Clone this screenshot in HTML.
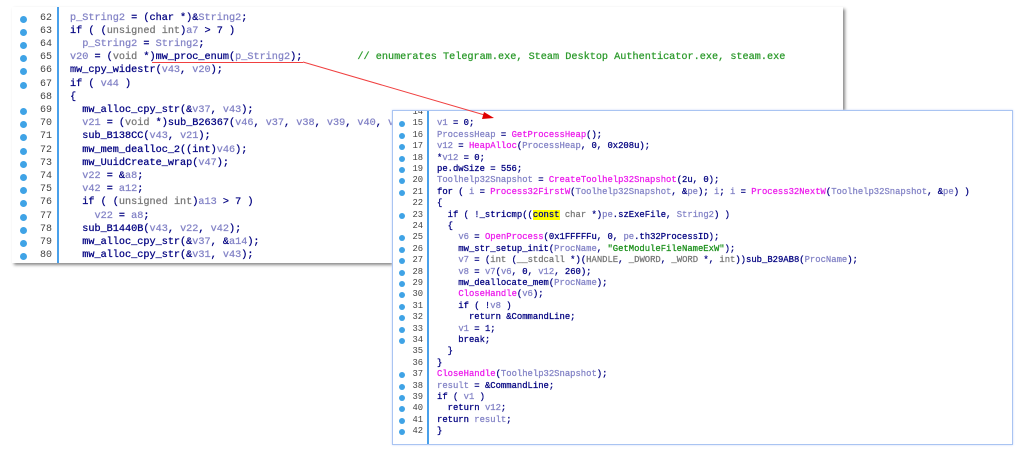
<!DOCTYPE html>
<html><head><meta charset="utf-8"><style>
body{margin:0;width:1024px;height:455px;background:#fff;position:relative;overflow:hidden;font-family:"Liberation Mono","DejaVu Sans Mono",monospace}
.box{position:absolute;background:#fff}
#b1{left:12px;top:7px;width:831px;height:256px;box-shadow:2px 2px 3px #888;overflow:hidden}
#b2{left:392px;top:110px;width:619px;height:333px;border:1.5px solid #a9c4f2;box-shadow:0 0 2px #c8d8f8;overflow:hidden}
.l{position:absolute;white-space:pre;color:#000080;-webkit-text-stroke:0.25px currentColor}
#b1 .l{font-size:10.2px;left:58px}
#b2 .l{font-size:8.9px;left:44px}
.n{position:absolute;color:#444;text-align:right}
#b1 .n{font-size:10px;left:18px;width:22px}
#b2 .n{font-size:8.8px;left:10px;width:20px}
.d{position:absolute;border-radius:50%;background:#3fa3e6}
#b1 .d{width:7px;height:7px;left:8px}
#b2 .d{width:6px;height:6px;left:6px}
.vl{position:absolute;top:0;bottom:0;width:1.5px;background:#49a0ea}
.v{color:#8383c6}.a{color:#ec1aec}.c{color:#2c9a2c}.s{color:#1a8f1a}.g{color:#777}
.hl{background:#ffff00}
</style></head><body>
<div class="box" id="b1">
<div class="vl" style="left:45px"></div>
<div id="c1"></div>
</div>
<div class="box" id="b2">
<div class="vl" style="left:34px"></div>
<div id="c2"></div>
</div>
<svg style="position:absolute;left:0;top:0" width="1024" height="455">
<line x1="152" y1="62.5" x2="303" y2="62.5" stroke="#f04040" stroke-width="1"/>
<line x1="303" y1="62" x2="488" y2="116" stroke="#f04040" stroke-width="1"/>
<polygon points="494,118 484,112 482,119" fill="#e00000"/>
</svg>
<script>
function build(id,start,top,step,lines,nodot){
 var h='';
 lines.forEach(function(t,i){
  var y=top+i*step, n=start+i;
  if(nodot.indexOf(n)<0) h+='<div class="d" style="top:'+(y+3)+'px"></div>';
  h+='<div class="n" style="top:'+y+'px">'+n+'</div><div class="l" style="top:'+y+'px">'+t+'</div>';
 });
 document.getElementById(id).innerHTML=h;
}
build('c1',62,5.5,13.2,[
'<span class="v">p_String2</span> = (char *)&amp;<span class="v">String2</span>;',
'if ( (<span class="g">unsigned int</span>)<span class="v">a7</span> &gt; 7 )',
'  <span class="v">p_String2</span> = <span class="v">String2</span>;',
'<span class="v">v20</span> = (<span class="g">void</span> *)mw_proc_enum(<span class="v">p_String2</span>);         <span class="c">// enumerates Telegram.exe, Steam Desktop Authenticator.exe, steam.exe</span>',
'mw_cpy_widestr(<span class="v">v43</span>, <span class="v">v20</span>);',
'if ( <span class="v">v44</span> )',
'{',
'  mw_alloc_cpy_str(&amp;<span class="v">v37</span>, <span class="v">v43</span>);',
'  <span class="v">v21</span> = (<span class="g">void</span> *)sub_B26367(<span class="v">v46</span>, <span class="v">v37</span>, <span class="v">v38</span>, <span class="v">v39</span>, <span class="v">v40</span>, <span class="v">v41</span>);',
'  sub_B138CC(<span class="v">v43</span>, <span class="v">v21</span>);',
'  mw_mem_dealloc_2((int)<span class="v">v46</span>);',
'  mw_UuidCreate_wrap(<span class="v">v47</span>);',
'  <span class="v">v22</span> = &amp;<span class="v">a8</span>;',
'  <span class="v">v42</span> = <span class="v">a12</span>;',
'  if ( (<span class="g">unsigned int</span>)<span class="v">a13</span> &gt; 7 )',
'    <span class="v">v22</span> = <span class="v">a8</span>;',
'  sub_B1440B(<span class="v">v43</span>, <span class="v">v22</span>, <span class="v">v42</span>);',
'  mw_alloc_cpy_str(&amp;<span class="v">v37</span>, &amp;<span class="v">a14</span>);',
'  mw_alloc_cpy_str(&amp;<span class="v">v31</span>, <span class="v">v43</span>);'
],[68]);
build('c2',14,-4,11.4,[
'',
'<span class="v">v1</span> = 0;',
'<span class="v">ProcessHeap</span> = <span class="a">GetProcessHeap</span>();',
'<span class="v">v12</span> = <span class="a">HeapAlloc</span>(<span class="v">ProcessHeap</span>, 0, 0x208u);',
'*<span class="v">v12</span> = 0;',
'pe.dwSize = 556;',
'<span class="v">Toolhelp32Snapshot</span> = <span class="a">CreateToolhelp32Snapshot</span>(2u, 0);',
'for ( <span class="v">i</span> = <span class="a">Process32FirstW</span>(<span class="v">Toolhelp32Snapshot</span>, &amp;<span class="v">pe</span>); <span class="v">i</span>; <span class="v">i</span> = <span class="a">Process32NextW</span>(<span class="v">Toolhelp32Snapshot</span>, &amp;<span class="v">pe</span>) )',
'{',
'  if ( !_stricmp((<span class="hl">const</span> <span class="g">char</span> *)<span class="v">pe</span>.szExeFile, <span class="v">String2</span>) )',
'  {',
'    <span class="v">v6</span> = <span class="a">OpenProcess</span>(0x1FFFFFu, 0, <span class="v">pe</span>.th32ProcessID);',
'    mw_str_setup_init(<span class="v">ProcName</span>, <span class="s">"GetModuleFileNameExW"</span>);',
'    <span class="v">v7</span> = (<span class="g">int</span> (<span class="g">__stdcall</span> *)(<span class="g">HANDLE</span>, <span class="g">_DWORD</span>, <span class="g">_WORD</span> *, <span class="g">int</span>))sub_B29AB8(<span class="v">ProcName</span>);',
'    <span class="v">v8</span> = <span class="v">v7</span>(<span class="v">v6</span>, 0, <span class="v">v12</span>, 260);',
'    mw_deallocate_mem(<span class="v">ProcName</span>);',
'    <span class="a">CloseHandle</span>(<span class="v">v6</span>);',
'    if ( !<span class="v">v8</span> )',
'      return &amp;CommandLine;',
'    <span class="v">v1</span> = 1;',
'    break;',
'  }',
'}',
'<span class="a">CloseHandle</span>(<span class="v">Toolhelp32Snapshot</span>);',
'<span class="v">result</span> = &amp;CommandLine;',
'if ( <span class="v">v1</span> )',
'  return <span class="v">v12</span>;',
'return <span class="v">result</span>;',
'}'
],[14,22,24,35,36]);
</script>
</body></html>
